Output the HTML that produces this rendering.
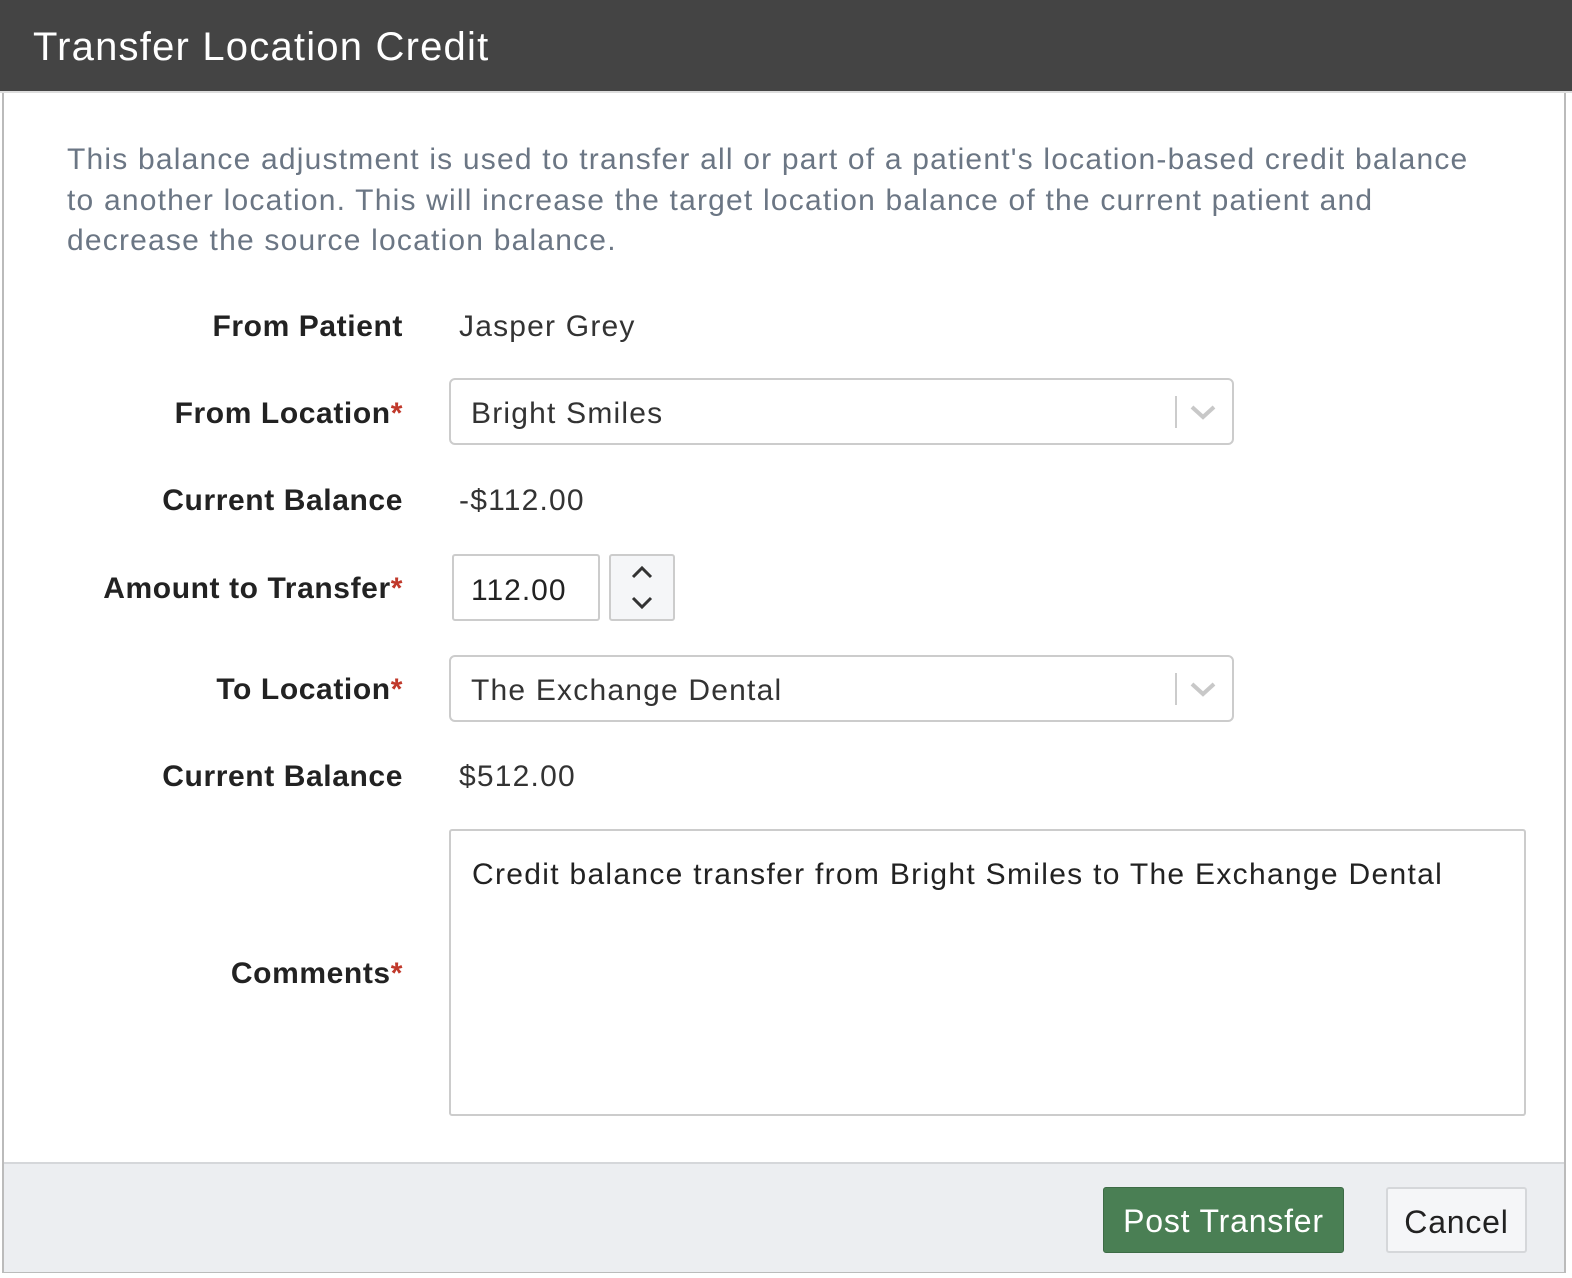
<!DOCTYPE html>
<html><head><style>
*{box-sizing:border-box;margin:0;padding:0}
body{width:1572px;height:1278px;background:#fff;font-family:"Liberation Sans",sans-serif;position:relative;overflow:hidden}
.hdr{position:absolute;left:0;top:0;width:1572px;height:93px;background:#444;border-bottom:2px solid #ddd}
.hdr span{position:absolute;left:33px;top:25px;font-size:40px;color:#fff;letter-spacing:1.2px}
.frame{position:absolute;left:2px;top:93px;width:1564px;height:1180px;border-left:2px solid #bbb;border-right:2px solid #bbb;border-bottom:2px solid #bbb}
.desc{position:absolute;left:67px;top:140px;width:1430px;font-size:30px;line-height:40.5px;color:#6b7684;letter-spacing:1.2px}
.lbl{position:absolute;right:1169px;font-size:30px;font-weight:bold;color:#222;white-space:nowrap;letter-spacing:0.6px}
.lbl i{font-style:normal;color:#c0392b}
.val{position:absolute;left:459px;font-size:30px;color:#333;letter-spacing:1.2px}
.sel{position:absolute;left:449px;width:785px;height:67px;border:2px solid #ccc;border-radius:6px;font-size:30px;color:#333;padding:17px 20px;letter-spacing:1.2px}
.sel .bar{position:absolute;right:55px;top:16px;width:2px;height:32px;background:#ccc}
.sel svg{position:absolute;right:14px;top:20px}
.num{position:absolute;left:452px;top:554px;width:148px;height:67px;border:2px solid #ccc;border-radius:3px;font-size:30px;padding:18px 17px;color:#222;letter-spacing:1px}
.spin{position:absolute;left:609px;top:554px;width:66px;height:67px;border:2px solid #ccc;border-radius:3px;background:#f5f6f8}
.ta{position:absolute;left:449px;top:829px;width:1077px;height:287px;border:2px solid #ccc;border-radius:3px;font-size:30px;color:#222;padding:27px 21px;letter-spacing:1.3px}
.foot{position:absolute;left:4px;top:1162px;width:1560px;height:110px;background:#eceef1;border-top:2px solid #d5d7da}
.btn{position:absolute;top:1187px;height:66px;font-size:32px;border-radius:3px;text-align:center;line-height:66px;letter-spacing:0.8px}
</style></head><body>
<div class="hdr"><span>Transfer Location Credit</span></div>
<div class="frame"></div>
<div class="desc">This balance adjustment is used to transfer all or part of a patient's location-based credit balance to another location. This will increase the target location balance of the current patient and decrease the source location balance.</div>

<div class="lbl" style="top:310px">From Patient</div>
<div class="val" style="top:310px">Jasper Grey</div>

<div class="lbl" style="top:397px">From Location<i>*</i></div>
<div class="sel" style="top:378px">Bright Smiles<div class="bar"></div><svg width="30" height="24" viewBox="0 0 30 24"><path d="M4 7 L15 17 L26 7" fill="none" stroke="#c8c8c8" stroke-width="4"/></svg></div>

<div class="lbl" style="top:484px">Current Balance</div>
<div class="val" style="top:484px">-$112.00</div>

<div class="lbl" style="top:572px">Amount to Transfer<i>*</i></div>
<div class="num">112.00</div>
<div class="spin"><svg width="62" height="63" viewBox="0 0 62 63"><path d="M22 21 L31 12 L40 21" fill="none" stroke="#333" stroke-width="3"/><path d="M22 42 L31 51 L40 42" fill="none" stroke="#333" stroke-width="3"/></svg></div>

<div class="lbl" style="top:673px">To Location<i>*</i></div>
<div class="sel" style="top:655px">The Exchange Dental<div class="bar"></div><svg width="30" height="24" viewBox="0 0 30 24"><path d="M4 7 L15 17 L26 7" fill="none" stroke="#c8c8c8" stroke-width="4"/></svg></div>

<div class="lbl" style="top:760px">Current Balance</div>
<div class="val" style="top:760px">$512.00</div>

<div class="lbl" style="top:957px">Comments<i>*</i></div>
<div class="ta">Credit balance transfer from Bright Smiles to The Exchange Dental</div>

<div class="foot"></div>
<div class="btn" style="left:1103px;width:241px;background:#4a7f54;color:#fff;border:1px solid #3d6b46">Post Transfer</div>
<div class="btn" style="left:1386px;width:141px;background:#f5f6f8;color:#222;border:2px solid #d5d7da">Cancel</div>
</body></html>
